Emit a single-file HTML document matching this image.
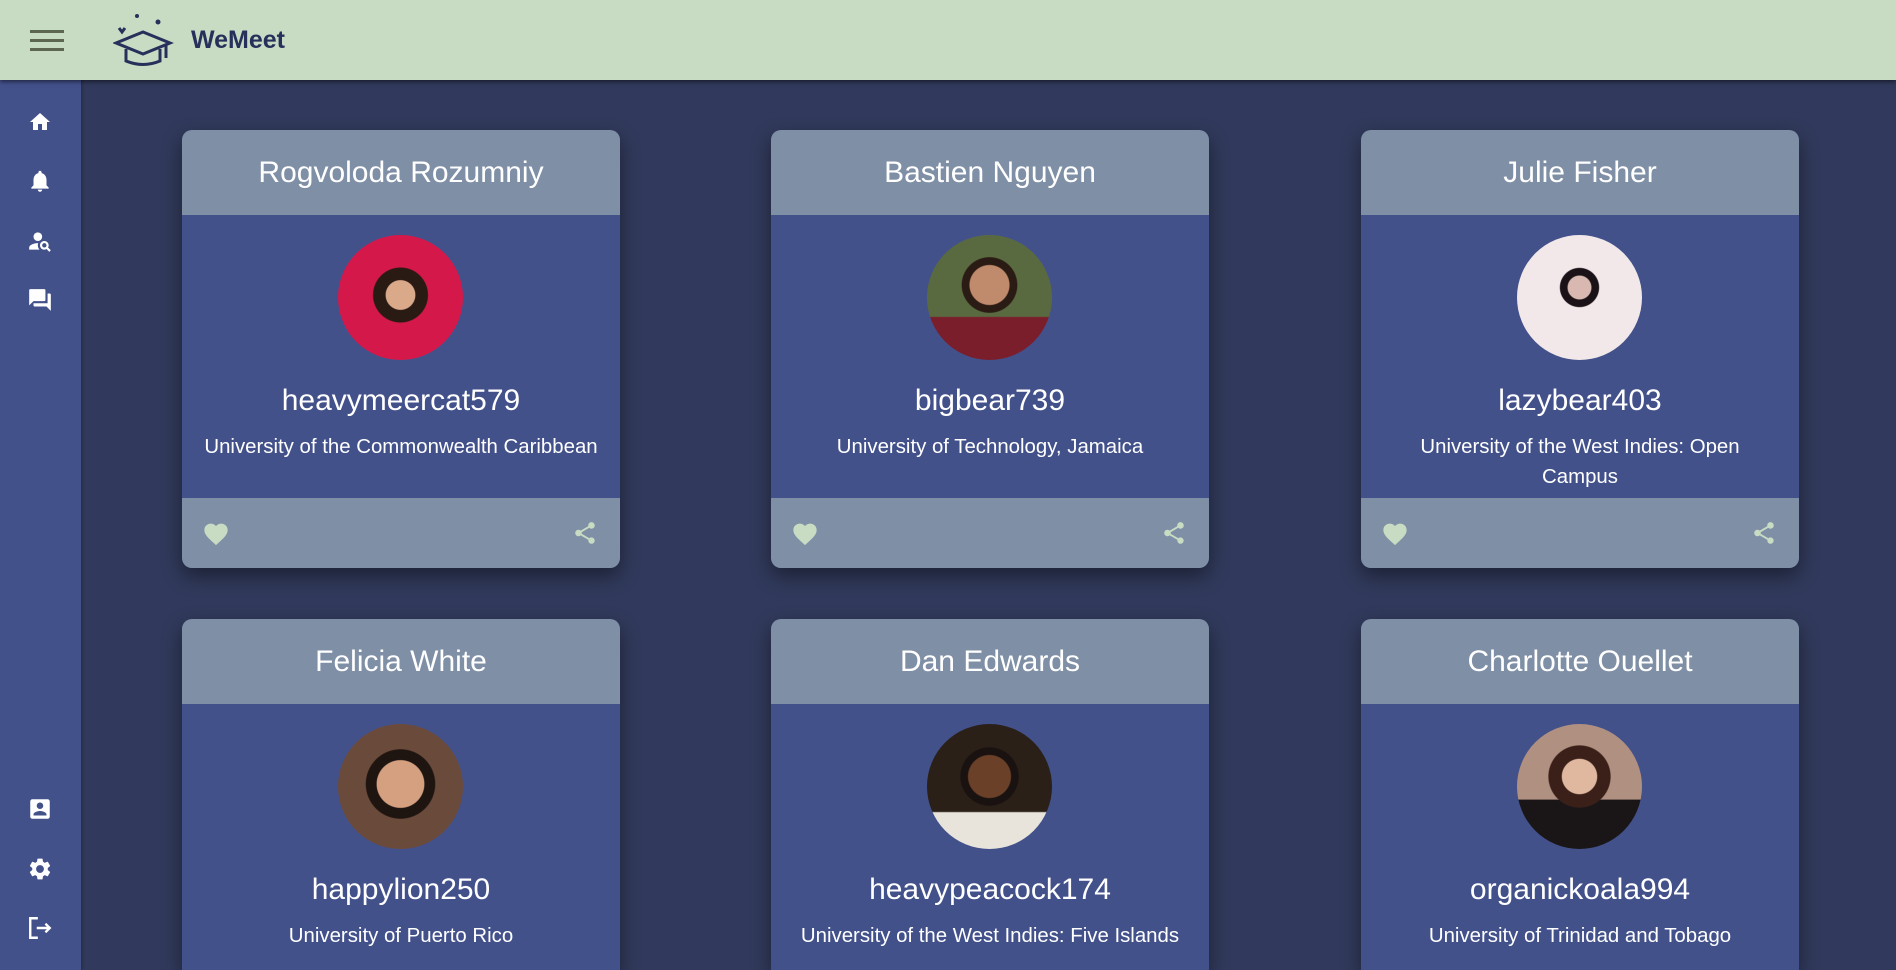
<!DOCTYPE html>
<html><head><meta charset="utf-8"><style>
*{box-sizing:border-box;margin:0;padding:0}
html,body{width:1896px;height:970px;overflow:hidden}
body{background:#313a5c;font-family:"Liberation Sans",Arial,sans-serif}
#wrap{position:relative;width:1896px;height:970px;overflow:hidden}
.top{position:absolute;left:0;top:0;width:1896px;height:80px;background:#c8dbc3;box-shadow:0 2px 4px rgba(0,0,0,.5);z-index:3}
.side{position:absolute;left:0;top:80px;width:81px;height:890px;background:#43518b;box-shadow:1px 0 3px rgba(0,0,0,.3)}
.side svg{position:absolute;left:27px}
.card{position:absolute;width:438px;height:438px;border-radius:10px;overflow:hidden;background:#43518b;box-shadow:0 8px 20px rgba(0,0,0,.45)}
.card.b{height:351px;border-radius:10px 10px 0 0}
.ch{height:85px;background:#7f8fa6;color:#fff;font-size:30px;text-align:center;line-height:85px}
.av{position:absolute;left:156px;top:105px;width:125px;height:125px;border-radius:50%}
.un{position:absolute;top:254px;width:100%;text-align:center;color:#fff;font-size:30px}
.uni{position:absolute;top:302px;left:16px;right:16px;text-align:center;color:#fff;font-size:20.4px;line-height:30px}
.cf{position:absolute;top:368px;left:0;width:100%;height:70px;background:#7f8fa6}
.cf .h{position:absolute;left:20px;top:22px}
.cf .s{position:absolute;right:22px;top:22px}
</style></head><body><div id="wrap">
<div class="top">
<svg style="position:absolute;left:30px;top:30px" width="34" height="22"><rect y="0" width="34" height="3" fill="#5c6650"/><rect y="9" width="34" height="3" fill="#5c6650"/><rect y="18" width="34" height="3" fill="#5c6650"/></svg>
<svg style="position:absolute;left:113px;top:12px" width="62" height="56" viewBox="0 0 62 56" fill="none" stroke="#27305a" stroke-width="3">
<path d="M3 31 L30 20 L57 31 L30 42 Z"/><path d="M13 37 V49 Q30 56 47 49 V37"/><path d="M53 33 V46"/><circle cx="24" cy="4" r="2" fill="#27305a" stroke="none"/><circle cx="45" cy="10" r="2.5" fill="#27305a" stroke="none"/><path d="M6 16 l3 4 l3 -4" /></svg>
<div style="position:absolute;left:191px;top:26px;font-size:25px;font-weight:bold;color:#27305a">WeMeet</div>
</div>
<div class="side">
<svg style="top:30px" width="26" height="24" viewBox="0 0 24 24"><path d="M10 20v-6h4v6h5v-8h3L12 3 2 12h3v8z" fill="#fff"/></svg>
<svg style="top:88px" width="26" height="26" viewBox="0 0 24 24"><path d="M12 22c1.1 0 2-.9 2-2h-4c0 1.1.9 2 2 2zm6-6v-5c0-3.1-1.6-5.6-4.5-6.3V4c0-.8-.7-1.5-1.5-1.5s-1.5.7-1.5 1.5v.7C7.6 5.4 6 7.9 6 11v5l-2 2v1h16v-1z" fill="#fff"/></svg>
<svg style="top:148px" width="26" height="26" viewBox="0 0 24 24"><circle cx="10" cy="8" r="4" fill="#fff"/><path d="M10.35 14.01C7.62 13.91 2 15.27 2 18v2h9.54c-2.47-2.76-1.23-5.89-1.19-5.99z" fill="#fff"/><path d="M19.43 18.02c.36-.59.57-1.28.57-2.02 0-2.21-1.79-4-4-4s-4 1.79-4 4 1.79 4 4 4c.74 0 1.43-.22 2.02-.57L20.59 22 22 20.59zM16 18c-1.1 0-2-.9-2-2s.9-2 2-2 2 .9 2 2-.9 2-2 2z" fill="#fff"/></svg>
<svg style="top:207px" width="26" height="26" viewBox="0 0 24 24"><path d="M21 6h-2v9H6v2c0 .55.45 1 1 1h11l4 4V7c0-.55-.45-1-1-1zm-4 6V3c0-.55-.45-1-1-1H3c-.55 0-1 .45-1 1v14l4-4h10c.55 0 1-.45 1-1z" fill="#fff"/></svg>
<svg style="top:716px" width="26" height="26" viewBox="0 0 24 24"><path d="M3 5v14c0 1.1.89 2 2 2h14c1.1 0 2-.9 2-2V5c0-1.1-.9-2-2-2H5a2 2 0 00-2 2zm12 4c0 1.66-1.34 3-3 3s-3-1.34-3-3 1.34-3 3-3 3 1.34 3 3zm-9 8c0-2 4-3.1 6-3.1s6 1.1 6 3.1v1H6z" fill="#fff"/></svg>
<svg style="top:776px" width="26" height="26" viewBox="0 0 24 24"><path d="M19.14 12.94c.04-.3.06-.61.06-.94 0-.32-.02-.64-.07-.94l2.030-1.58a.49.49 0 00.12-.61l-1.92-3.32a.488.488 0 00-.59-.22l-2.39.96c-.5-.38-1.03-.7-1.62-.94l-.36-2.54a.484.484 0 00-.48-.41h-3.84c-.24 0-.43.17-.47.41l-.36 2.54c-.59.24-1.13.57-1.62.94l-2.39-.96c-.22-.08-.47 0-.59.22L2.74 8.87c-.12.21-.08.47.12.61l2.03 1.58c-.05.3-.09.63-.09.94s.2.64.07.94l-2.03 1.58a.49.49 0 00-.12.61l1.92 3.32c.12.22.37.29.59.22l2.39-.96c.5.38 1.03.7 1.62.94l.36 2.54c.05.24.24.41.48.41h3.84c.24 0 .44-.17.47-.41l.36-2.54c.59-.24 1.13-.56 1.62-.94l2.39.96c.22.08.47 0 .59-.22l1.92-3.32c.12-.22.07-.47-.12-.61zM12 15.6c-1.98 0-3.6-1.62-3.6-3.6s1.62-3.6 3.6-3.6 3.6 1.62 3.6 3.6-1.62 3.6-3.6 3.6z" fill="#fff"/></svg>
<svg style="top:835px" width="26" height="26" viewBox="0 0 24 24" fill="none" stroke="#fff" stroke-width="2.2"><path d="M10 3H3v18h7M9 12h12M17 8l4 4-4 4"/></svg>
</div>

<div class="card" style="left:182px;top:130px"><div class="ch">Rogvoloda Rozumniy</div>
<div class="av" style="background:radial-gradient(circle at 50% 48%,#d9a98a 0 16%,#2a1a14 17% 30%,#d4184a 31%)"></div>
<div class="un">heavymeercat579</div><div class="uni">University of the Commonwealth Caribbean</div>
<div class="cf"><svg class="h" width="28" height="26" viewBox="0 0 24 22"><path d="M12 21.35l-1.45-1.32C5.4 15.36 2 12.28 2 8.5 2 5.42 4.42 3 7.5 3c1.74 0 3.41.81 4.5 2.09C13.09 3.81 14.76 3 16.5 3 19.58 3 22 5.42 22 8.5c0 3.78-3.4 6.86-8.55 11.54z" fill="#c8dbc3"/></svg><svg class="s" width="26" height="26" viewBox="0 0 24 24"><path d="M18 16.08c-.76 0-1.44.3-1.96.77L8.91 12.7c.05-.23.09-.46.09-.7s-.04-.47-.09-.7l7.05-4.11A2.99 2.99 0 0021 5a3 3 0 10-5.91.7L8.04 9.81A2.99 2.99 0 003 12a3 3 0 005.04 2.19l7.12 4.16c-.05.21-.08.43-.08.65a2.92 2.92 0 102.92-2.92z" fill="#c8dbc3"/></svg></div></div>

<div class="card" style="left:771px;top:130px"><div class="ch">Bastien Nguyen</div>
<div class="av" style="background:radial-gradient(circle at 50% 40%,#c08a6c 0 20%,#2a1c14 21% 28%,transparent 29%),linear-gradient(#5a6a40 0 65%,#7a1e2c 66%)"></div>
<div class="un">bigbear739</div><div class="uni">University of Technology, Jamaica</div>
<div class="cf"><svg class="h" width="28" height="26" viewBox="0 0 24 22"><path d="M12 21.35l-1.45-1.32C5.4 15.36 2 12.28 2 8.5 2 5.42 4.42 3 7.5 3c1.74 0 3.41.81 4.5 2.09C13.09 3.81 14.76 3 16.5 3 19.58 3 22 5.42 22 8.5c0 3.78-3.4 6.86-8.55 11.54z" fill="#c8dbc3"/></svg><svg class="s" width="26" height="26" viewBox="0 0 24 24"><path d="M18 16.08c-.76 0-1.44.3-1.96.77L8.91 12.7c.05-.23.09-.46.09-.7s-.04-.47-.09-.7l7.05-4.11A2.99 2.99 0 0021 5a3 3 0 10-5.91.7L8.04 9.81A2.99 2.99 0 003 12a3 3 0 005.04 2.19l7.12 4.16c-.05.21-.08.43-.08.65a2.92 2.92 0 102.92-2.92z" fill="#c8dbc3"/></svg></div></div>

<div class="card" style="left:1361px;top:130px"><div class="ch">Julie Fisher</div>
<div class="av" style="background:radial-gradient(circle at 50% 42%,#d8b8b0 0 12%,#1a1216 13% 20%,#f2e8ea 21%)"></div>
<div class="un">lazybear403</div><div class="uni" style="left:50px;right:50px">University of the West Indies: Open Campus</div>
<div class="cf"><svg class="h" width="28" height="26" viewBox="0 0 24 22"><path d="M12 21.35l-1.45-1.32C5.4 15.36 2 12.28 2 8.5 2 5.42 4.42 3 7.5 3c1.74 0 3.41.81 4.5 2.09C13.09 3.81 14.76 3 16.5 3 19.58 3 22 5.42 22 8.5c0 3.78-3.4 6.86-8.55 11.54z" fill="#c8dbc3"/></svg><svg class="s" width="26" height="26" viewBox="0 0 24 24"><path d="M18 16.08c-.76 0-1.44.3-1.96.77L8.91 12.7c.05-.23.09-.46.09-.7s-.04-.47-.09-.7l7.05-4.11A2.99 2.99 0 0021 5a3 3 0 10-5.91.7L8.04 9.81A2.99 2.99 0 003 12a3 3 0 005.04 2.19l7.12 4.16c-.05.21-.08.43-.08.65a2.92 2.92 0 102.92-2.92z" fill="#c8dbc3"/></svg></div></div>

<div class="card b" style="left:182px;top:619px"><div class="ch">Felicia White</div>
<div class="av" style="background:radial-gradient(circle at 50% 48%,#d4a080 0 26%,#1e1410 27% 38%,#6a4a3a 39%)"></div>
<div class="un">happylion250</div><div class="uni">University of Puerto Rico</div></div>

<div class="card b" style="left:771px;top:619px"><div class="ch">Dan Edwards</div>
<div class="av" style="background:radial-gradient(circle at 50% 42%,#6a4028 0 22%,#1a1210 23% 30%,transparent 31%),linear-gradient(#2a2018 0 70%,#e8e4dc 71%)"></div>
<div class="un">heavypeacock174</div><div class="uni">University of the West Indies: Five Islands</div></div>

<div class="card b" style="left:1361px;top:619px"><div class="ch">Charlotte Ouellet</div>
<div class="av" style="background:radial-gradient(circle at 50% 42%,#e0b8a0 0 18%,#3a2018 19% 32%,transparent 33%),linear-gradient(#b09080 0 60%,#1a1618 61%)"></div>
<div class="un">organickoala994</div><div class="uni">University of Trinidad and Tobago</div></div>
</div></body></html>
